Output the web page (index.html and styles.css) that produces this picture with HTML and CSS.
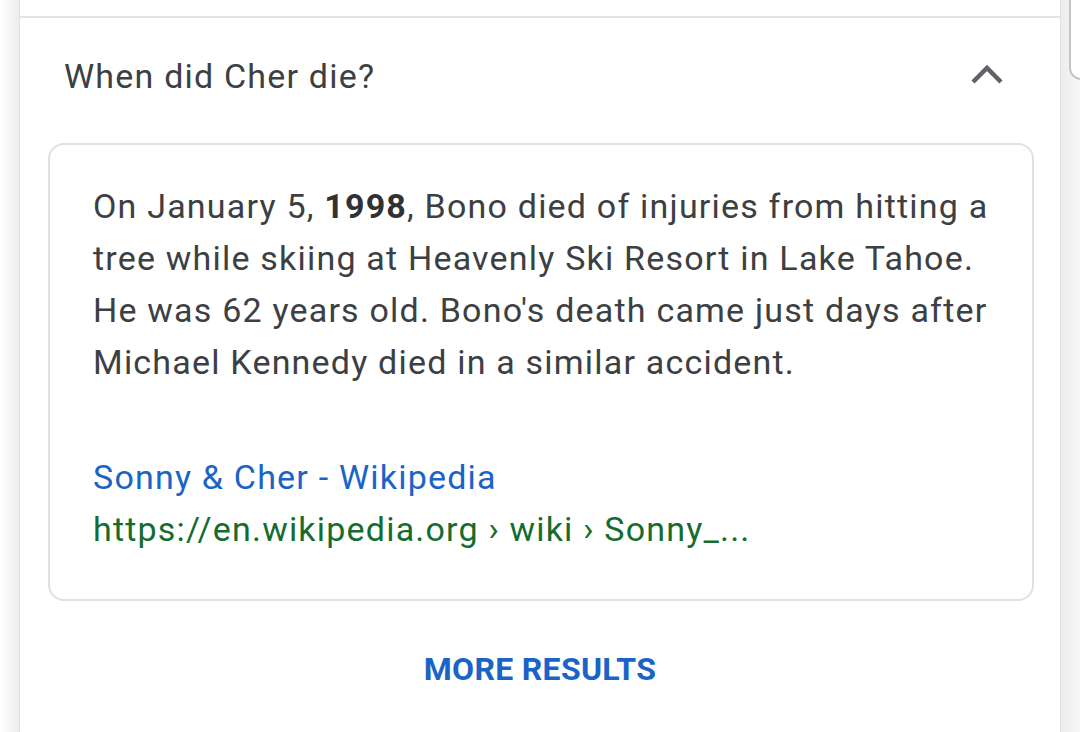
FILE: index.html
```html
<!DOCTYPE html>
<html>
<head>
<meta charset="utf-8">
<link rel="stylesheet" href="styles.css">
</head>
<body>
<div class="page">
  <div class="card">
    <div class="prev"></div>
    <div class="question">
      <span class="q-text">When did Cher die?</span>
      <svg class="chev" width="36" height="24" viewBox="0 0 36 24"><polyline points="3,20 17,6 31,20" fill="none" stroke="#5f6368" stroke-width="4.5"/></svg>
    </div>
    <div class="answer">
      <p class="para">On January 5, <b>1998</b>, Bono died of injuries from hitting a<br>tree while skiing at Heavenly Ski Resort in Lake Tahoe.<br>He was 62 years old. Bono's death came just days after<br>Michael Kennedy died in a similar accident.</p>
      <div class="source">
        <div class="src-title">Sonny &amp; Cher - Wikipedia</div>
        <div class="src-url">https://en.wikipedia.org › wiki › Sonny_...</div>
      </div>
    </div>
    <div class="more">MORE RESULTS</div>
  </div>
  <div class="peek"></div>
</div>
</body>
</html>
```
FILE: styles.css
```css
html, body {
  margin: 0;
  padding: 0;
  background: #fff;
}
body {
  width: 1080px;
  height: 732px;
  overflow: hidden;
  font-family: Roboto, "Liberation Sans", sans-serif;
}
.page {
  position: relative;
  height: 732px;
  background: linear-gradient(to right, #fff 0px, #ececec 19px, #ececec 1061px, #f7f7f7 1080px);
}
.card {
  margin-left: 19px;
  width: 1040px;
  height: 732px;
  background: #fff;
  border-left: 1px solid #e2e2e2;
  border-right: 1px solid #e2e2e2;
}
.prev {
  height: 16px;
  border-bottom: 2px solid #e3e3e5;
}
.question {
  height: 125px;
  display: flex;
  align-items: center;
  justify-content: space-between;
  padding: 0 54px 0 44px;
}
.q-text {
  font-size: 34px;
  letter-spacing: 1.2px;
  color: #3c4043;
  margin-top: -10px;
}
.chev {
  margin-top: -14px;
}
.answer {
  margin: 0 26px 0 28px;
  border: 2px solid #dfe1e5;
  border-radius: 16px;
  padding: 35px 10px 44px 43px;
  height: 458px;
  box-sizing: border-box;
}
.para {
  margin: 0;
  font-size: 34px;
  line-height: 52px;
  letter-spacing: 1.2px;
  white-space: nowrap;
  color: #3c4043;
}
.para b {
  font-weight: 700;
  color: #303134;
}
.source {
  margin-top: 63px;
  font-size: 34px;
  line-height: 52px;
  letter-spacing: 1.2px;
}
.src-title {
  color: #1a64c8;
}
.src-url {
  color: #146c2e;
}
.more {
  text-align: center;
  font-size: 32px;
  font-weight: 700;
  color: #1a64c8;
  margin-top: 49px;
  letter-spacing: 0.3px;
}
.peek {
  position: absolute;
  left: 1069px;
  top: -12px;
  width: 40px;
  height: 88px;
  border: 2px solid #c4c4c4;
  border-radius: 12px;
  background: #fff;
}
```
